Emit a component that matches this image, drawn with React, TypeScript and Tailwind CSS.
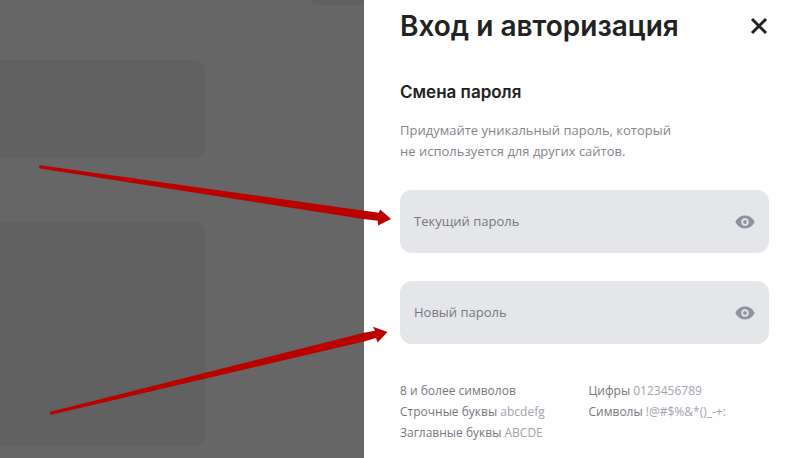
import React, { useState } from 'react';

const hints = [
  [
    { label: '8 и более символов', sample: '' },
    { label: 'Строчные буквы', sample: 'abcdefg' },
    { label: 'Заглавные буквы', sample: 'ABCDE' },
  ],
  [
    { label: 'Цифры', sample: '0123456789' },
    { label: 'Символы', sample: '!@#$%&*()_-+:' },
  ],
];

function EyeIcon() {
  return (
    <svg width="20" height="14" viewBox="0 0 20 14" aria-hidden="true">
      <path
        fill="#9192a0"
        fillRule="evenodd"
        d="M10 .6C5.600.6 2.100 3.200.4 7c1.700 3.800 5.200 6.400 9.600 6.400s7.900-2.600 9.600-6.400C17.900 3.200 14.400.6 10 .6ZM10 10.700a3.700 3.700 0 1 1 0-7.400 3.700 3.700 0 0 1 0 7.400Z"
      />
      <circle cx="10" cy="7" r="1.900" fill="#9192a0" />
    </svg>
  );
}

function PasswordField({ id, label }: { id: string; label: string }) {
  const [visible, setVisible] = useState(false);

  return (
    <div className="flex h-[63px] items-center rounded-xl bg-[#e5e6ea] px-3.5 text-[13px] text-[#77787f]">
      <label htmlFor={id}>{label}</label>
      <input
        id={id}
        type={visible ? 'text' : 'password'}
        className="ml-2 min-w-0 flex-1 bg-transparent outline-none"
      />
      <button type="button" aria-label="Показать пароль" onClick={() => setVisible(!visible)}>
        <EyeIcon />
      </button>
    </div>
  );
}

export default function App() {
  return (
    <div className="relative flex min-h-screen overflow-hidden bg-[#666666] font-['Open_Sans','Noto_Sans',sans-serif]">
      <div className="flex min-w-0 flex-1 flex-col">
        <div className="h-[5px] w-[52px] self-end rounded-bl-xl bg-[#616161]" />
        <div className="mt-[55px] mr-[159px] h-[98px] rounded-r-xl bg-[#616161]" />
        <div className="mt-16 mr-[159px] h-[224px] rounded-r-xl bg-[#616161]" />
      </div>

      <main className="w-[436px] shrink-0 bg-[#fefefe] pr-[31px] pl-9 text-[#222222]">
        <header className="flex items-center justify-between pt-2">
          <h1 className="font-['Inter'] text-[28px] leading-9 font-semibold">Вход и авторизация</h1>
          <button type="button" aria-label="Закрыть" className="flex size-5 items-center justify-center">
            <svg width="18" height="18" viewBox="0 0 18 18" stroke="#222222" strokeWidth="3" aria-hidden="true">
              <path d="M2 2l14 14M16 2L2 16" />
            </svg>
          </button>
        </header>

        <h2 className="mt-9 font-['Inter'] text-[17px] leading-6 font-semibold">Смена пароля</h2>
        <p className="mt-4 text-[13px] leading-[21px] text-[#85868d]">
          Придумайте уникальный пароль, который
          <br />
          не используется для других сайтов.
        </p>

        <form className="mt-7 flex flex-col gap-7">
          <PasswordField id="current-password" label="Текущий пароль" />
          <PasswordField id="new-password" label="Новый пароль" />
        </form>

        <div className="mt-9 grid grid-cols-2 gap-2 text-xs leading-[21px] text-[#77787f]">
          {hints.map((column, i) => (
            <ul key={i}>
              {column.map((hint) => (
                <li key={hint.label}>
                  {hint.label} <span className="text-[#a3a4ad]">{hint.sample}</span>
                </li>
              ))}
            </ul>
          ))}
        </div>
      </main>

      {/* arrows pointing at the two fields */}
      <svg
        className="pointer-events-none absolute top-0 left-0"
        width="400"
        height="458"
        viewBox="0 0 400 458"
        fill="#bb0000"
        aria-hidden="true"
      >
        <path d="M40 165.200L378.800 212.800L380.200 209.500L391 219L378 225.500L377.800 220.800L363 219L40 168.600Q38.200 166.800 40 165.200Z" />
        <path d="M50.300 411.800L364 332.800L375 330.800L373 326.800L387.500 332L377.500 342.500L376 338L364 341.600L51 414.800Q49.300 413.300 50.300 411.800Z" />
      </svg>
    </div>
  );
}
